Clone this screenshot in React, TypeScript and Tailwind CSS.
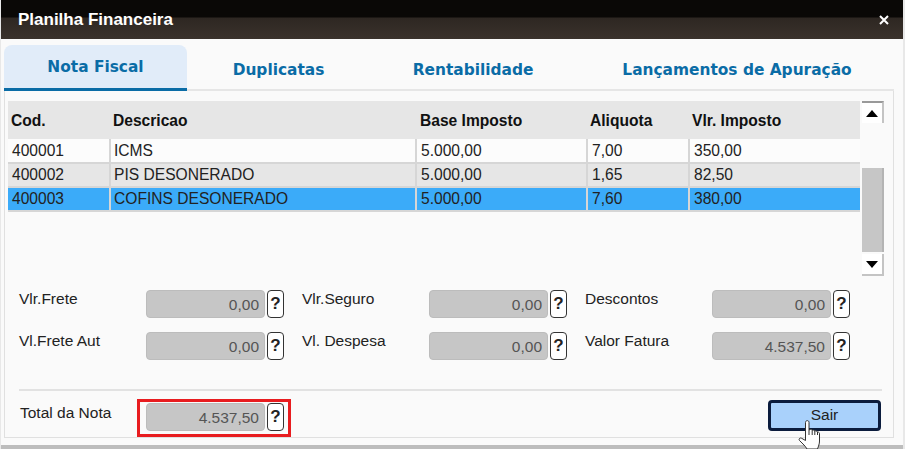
const sans = "font-['Liberation_Sans',Arial,sans-serif]";

const rows = [
  { cod: '400001', desc: 'ICMS', base: '5.000,00', aliq: '7,00', imposto: '350,00', bg: 'bg-[#fcfcfc]' },
  { cod: '400002', desc: 'PIS DESONERADO', base: '5.000,00', aliq: '1,65', imposto: '82,50', bg: 'bg-[#e6e6e6]' },
  { cod: '400003', desc: 'COFINS DESONERADO', base: '5.000,00', aliq: '7,60', imposto: '380,00', bg: 'bg-[#3babf9]' },
];

const tabs = [
  { label: 'Nota Fiscal', width: 'w-[183px]', active: true },
  { label: 'Duplicatas', width: 'w-[183px]' },
  { label: 'Rentabilidade', width: 'w-[206px]' },
  { label: 'Lançamentos de Apuração', width: 'w-[318px] pl-[4px]' },
];

const fields = [
  { label: 'Vlr.Frete', value: '0,00' },
  { label: 'Vlr.Seguro', value: '0,00' },
  { label: 'Descontos', value: '0,00' },
  { label: 'Vl.Frete Aut', value: '0,00' },
  { label: 'Vl. Despesa', value: '0,00' },
  { label: 'Valor Fatura', value: '4.537,50' },
];

function Amount({ value }: { value: string }) {
  return (
    <div className="flex items-center gap-[2px]">
      <div className="flex h-[28px] w-[119px] items-center justify-end rounded-[4px] border border-[#bcbcbc] bg-[#c6c6c6] pr-[5px] pt-[1px] text-[15.500px] text-[#555]">
        {value}
      </div>
      <div className="flex h-[28px] w-[17px] items-center justify-center rounded-[4px] border border-[#333] bg-white text-[17px] font-bold text-[#222]">
        ?
      </div>
    </div>
  );
}

function HandCursor() {
  return (
    <svg className="absolute left-[798px] top-[419px]" width="25" height="30" viewBox="0 0 25 30">
      <path
        d="M7.500 3.500c0-2.500 3.500-2.500 3.500 0V11l1-.5c1-.4 2 .2 2.200.8.800-.6 2.200-.2 2.400.7 1-.5 2.500 0 2.700 1 1-.2 2.200.4 2.200 1.500V22c0 3-1 5-2 8H9c-1-2-2.500-3.500-4-5l-3.500-3.500c-1.200-1.500.5-3.200 2.200-2.200L7.500 21.500Z"
        fill="#fff"
        stroke="#333"
        strokeWidth="1"
        strokeLinejoin="round"
      />
      <path d="M11 11v5M14.200 11.300V16M16.800 12V16M19.500 13v3" stroke="#333" strokeWidth="1" fill="none" />
    </svg>
  );
}

export default function App() {
  return (
    <div className={`relative h-[449px] w-[905px] overflow-hidden bg-[#e8e8e8] pl-[1px] pr-[2px] ${sans}`}>
      <div className="h-[445px] bg-[#fafafa]">
        {/* Title */}
        <div className="flex h-[39px] items-center justify-between bg-[linear-gradient(#0a0806_0,#0a0806_17px,#2e2722_18px,#3a322c_100%)] pl-[17px] pr-[14px] text-white">
          <span className="text-[17px] font-bold">Planilha Financeira</span>
          <svg width="10" height="10" viewBox="0 0 10 10" className="mt-[1px]">
            <path d="M1 1l8 8M9 1l-8 8" stroke="#fff" strokeWidth="2" />
          </svg>
        </div>

        {/* Tabs */}
        <div className="px-[3px] pt-[6px]">
          <div className="flex h-[46px] w-[890px] border-b-2 border-[#e6e6e6]">
            {tabs.map((t) => (
              <div
                key={t.label}
                className={`flex h-[46px] items-center justify-center font-['DejaVu_Sans',Verdana,sans-serif] text-[15.400px] font-bold text-[#0a6ca6] ${t.width} ${t.active ? 'rounded-t-[8px] border-b-[3px] border-[#0a6ca6] bg-[#e1ecf9] pt-[3px]' : 'pt-[5px]'}`}
              >
                {t.label}
              </div>
            ))}
          </div>

          {/* Panel */}
          <div className="h-[347px] w-[890px] border-x border-b border-[#e0e0e0] px-[3px] pt-[10px]">
            <div className="flex h-[175px] gap-[2px]">
              <table className="h-fit w-[852px] table-fixed border-collapse text-[15.600px] leading-[18px] text-[#222]">
                <colgroup>
                  <col className="w-[102px]" />
                  <col className="w-[306px]" />
                  <col className="w-[171px]" />
                  <col className="w-[102px]" />
                  <col className="w-[171px]" />
                </colgroup>
                <thead>
                  <tr className="h-[38px] bg-[#e6e6e6] text-left text-[#111]">
                    <th className="pl-[3px] pt-[1px] font-bold">Cod.</th>
                    <th className="pl-[3px] pt-[1px] font-bold">Descricao</th>
                    <th className="pl-[4px] pt-[1px] font-bold">Base Imposto</th>
                    <th className="pl-[3px] pt-[1px] font-bold">Aliquota</th>
                    <th className="pl-[3px] pt-[1px] font-bold">Vlr. Imposto</th>
                  </tr>
                </thead>
                <tbody>
                  {rows.map((r) => (
                    <tr key={r.cod} className={`h-[24px] ${r.bg}`}>
                      <td className="border-b-2 border-r-2 border-[#d6d6d6] pl-[4px]">{r.cod}</td>
                      <td className="border-b-2 border-r-2 border-[#d6d6d6] pl-[3px]">{r.desc}</td>
                      <td className="border-b-2 border-r-2 border-[#d6d6d6] pl-[4px]">{r.base}</td>
                      <td className="border-b-2 border-r-2 border-[#d6d6d6] pl-[4px]">{r.aliq}</td>
                      <td className="border-b-2 border-[#d6d6d6] pl-[4px]">{r.imposto}</td>
                    </tr>
                  ))}
                </tbody>
              </table>

              {/* Scrollbar */}
              <div className="flex w-[22px] flex-col">
                <div className="flex h-[22px] items-center justify-center border-r-2 border-t-2 border-[#c4c4c4] border-t-[#999] bg-white">
                  <div className="h-0 w-0 border-x-[6px] border-b-[7px] border-x-transparent border-b-black" />
                </div>
                <div className="h-[45px]" />
                <div className="h-[84px] border-r-2 border-[#b4b4b4] bg-[#c6c6c6]" />
                <div className="mt-[2px] flex h-[22px] items-center justify-center border-b-2 border-r-2 border-[#c4c4c4] bg-white">
                  <div className="h-0 w-0 border-x-[6px] border-t-[7px] border-x-transparent border-t-black" />
                </div>
              </div>
            </div>

            {/* Amounts */}
            <div className="mt-[14px] grid grid-cols-[283px_283px_1fr] gap-y-[14px] pl-[11px] text-[15.500px] text-[#222]">
              {fields.map((f) => (
                <div key={f.label} className="flex">
                  <span className="w-[127px] leading-[18px]">{f.label}</span>
                  <Amount value={f.value} />
                </div>
              ))}
            </div>

            <div className="ml-[11px] mt-[29px] h-[2px] w-[863px] bg-[#e2e2e2]" />

            {/* Total */}
            <div className="mt-[8px] flex items-start pl-[12px] pr-[9px] text-[15.500px] text-[#222]">
              <span className="mt-[4px] w-[117px] leading-[20px]">Total da Nota</span>
              <div className="border-[3px] border-[#e81c1f] pb-[3px] pl-[6px] pr-[4px] pt-[1px]">
                <Amount value="4.537,50" />
              </div>
              <button className="ml-auto mt-[1px] h-[31px] w-[113px] rounded-[4px] border-[3px] border-[#0b1c3d] bg-[#a9d1fb] pb-[2px] text-[15.500px] text-[#222]">
                Sair
              </button>
            </div>
          </div>
        </div>
      </div>
      <div className="h-[4px] bg-[#bdbdbd]" />
      <HandCursor />
    </div>
  );
}
